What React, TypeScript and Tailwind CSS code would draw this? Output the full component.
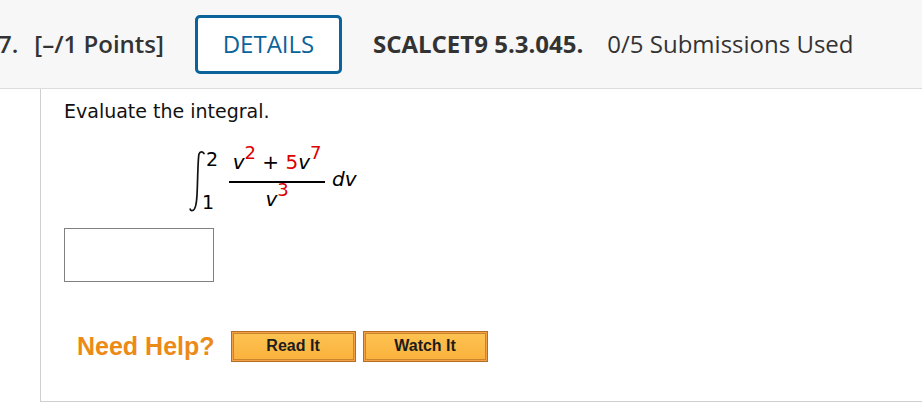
import React from 'react';

const Sup = ({ children }: { children: React.ReactNode }) => (
  <span className="relative -top-[10px] text-[18px] not-italic text-[#dd0000]">{children}</span>
);

const HelpButton = ({ label }: { label: string }) => (
  <button className="h-[31px] w-[125px] border border-[#b36f1f] bg-[#f4a048] p-[1px]">
    <span className="flex h-full w-full items-center justify-center border border-[#c9852e] bg-gradient-to-b from-[#fdc250] to-[#fbb23d] text-[16px] font-bold text-[#1d1d1d] [font-family:'Liberation_Sans',Arial,sans-serif]">
      {label}
    </span>
  </button>
);

const Header = () => (
  <div className="flex h-[89px] items-center border-b border-[#dcdcdc] bg-[#f7f7f7] text-[24px] text-[#333] [font-family:'Open_Sans',sans-serif]">
    <span className="-ml-[2px] font-semibold">7.</span>
    <span className="ml-[16px] font-semibold">[–/1 Points]</span>
    <button className="ml-[31px] flex h-[59px] w-[147px] items-center justify-center rounded-[5px] border-[3px] border-[#0b639b] bg-white text-[24px] text-[#0b639b]">
      DETAILS
    </button>
    <span className="ml-[31px] font-bold">SCALCET9 5.3.045.</span>
    <span className="ml-[24px]">0/5 Submissions Used</span>
  </div>
);

const Integral = () => (
  <div className="ml-[125px] mt-[24px] flex items-center text-[20px] text-black [font-family:'DejaVu_Sans',Verdana,sans-serif]">
    <div className="flex items-stretch">
      <svg width="16" height="62" viewBox="0 0 16 62">
        <path
          d="M15 3.5 C 13.5 1.2, 11 1.2, 10 4 C 8.8 9, 8.8 30, 8 45 C 7.5 55, 6.5 60, 3.5 60.5 C 2 60.8, 1.2 60, 1.2 59"
          fill="none"
          stroke="#111"
          strokeWidth="1.7"
          strokeLinecap="round"
        />
      </svg>
      <div className="flex h-[62px] flex-col justify-between text-[19px] leading-none">
        <span className="ml-[1px]">2</span>
        <span className="-ml-[3px]">1</span>
      </div>
    </div>
    <div className="ml-[11px] flex flex-col items-center">
      <div className="px-[2px] pb-[6px] leading-[24px]">
        <span className="italic">v</span>
        <Sup>2</Sup>
        <span> + </span>
        <span className="text-[#dd0000]">5</span>
        <span className="italic">v</span>
        <Sup>7</Sup>
      </div>
      <div className="h-[1.5px] w-[96px] bg-black" />
      <div className="pt-[5px] leading-[22px]">
        <span className="italic">v</span>
        <Sup>3</Sup>
      </div>
    </div>
    <span className="-mt-[3px] ml-[7px] italic">dv</span>
  </div>
);

export default function App() {
  return (
    <div className="h-[409px] w-[922px] overflow-hidden bg-white">
      <Header />
      <div className="ml-[40px] h-[313px] border-b border-l border-[#cfcfcf] pl-[23px]">
        <p className="pt-[8px] text-[19px] text-[#111] [font-family:'DejaVu_Sans',Verdana,sans-serif]">
          Evaluate the integral.
        </p>
        <Integral />
        <input className="mt-[16px] block h-[54px] w-[150px] border border-[#808080] bg-white" />
        <div className="ml-[13px] mt-[46px] flex items-center">
          <span className="text-[25px] font-bold text-[#ec8a17] [font-family:'Liberation_Sans',Arial,sans-serif]">
            Need Help?
          </span>
          <div className="ml-[16px] flex gap-[7px]">
            <HelpButton label="Read It" />
            <HelpButton label="Watch It" />
          </div>
        </div>
      </div>
    </div>
  );
}
